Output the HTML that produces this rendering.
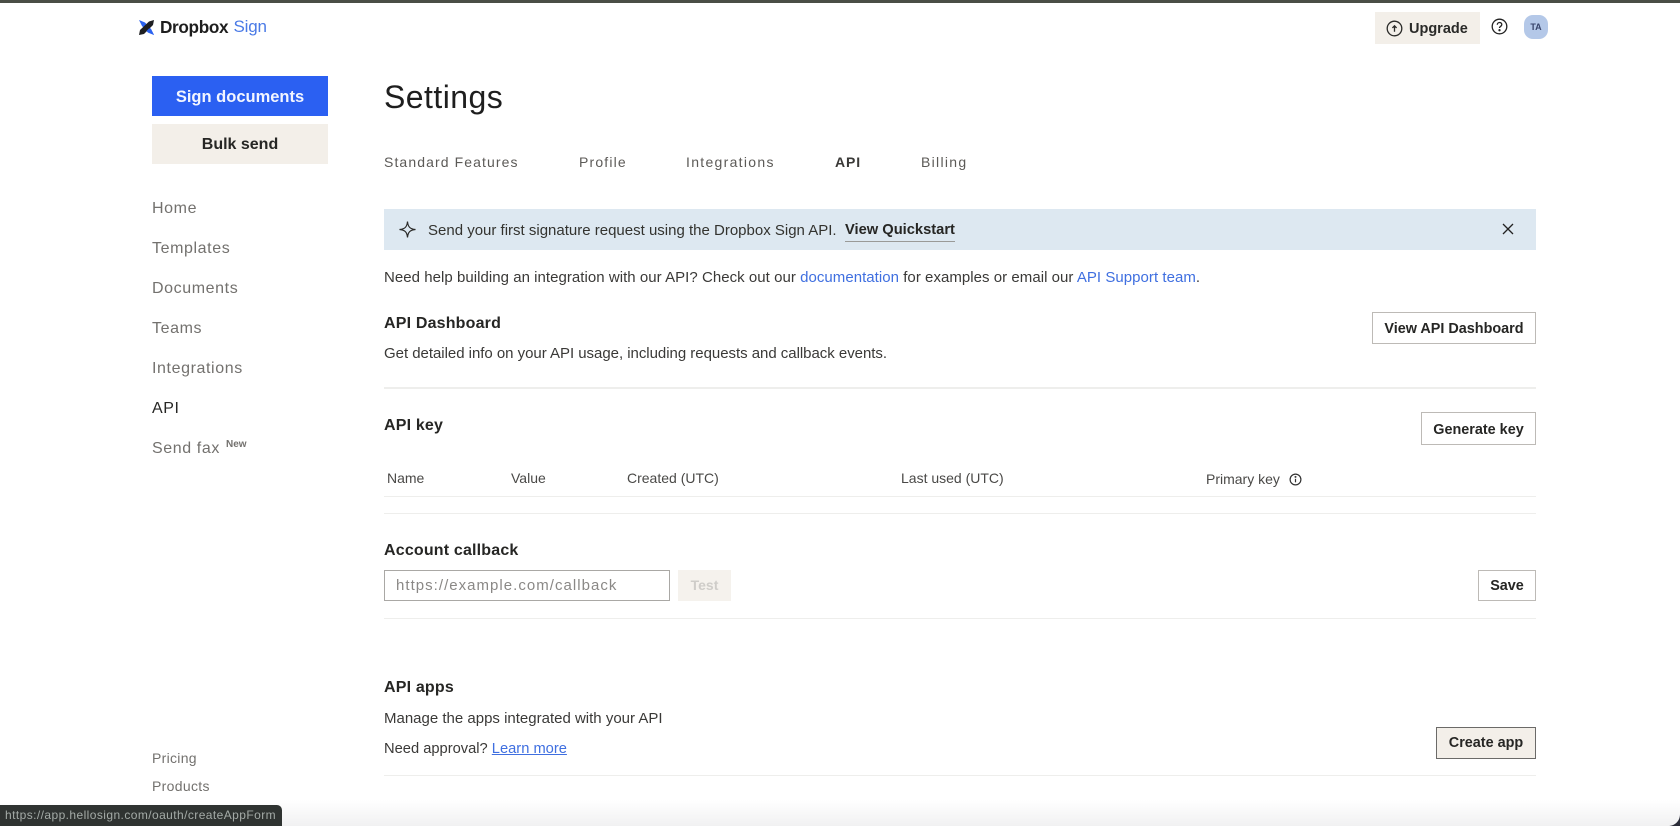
<!DOCTYPE html>
<html><head><meta charset="utf-8"><style>
html,body{margin:0;padding:0;width:1680px;height:826px;overflow:hidden;background:#fff;font-family:"Liberation Sans",sans-serif;color:#2a2a28}
.t{position:absolute;white-space:nowrap;line-height:20px;height:20px}
.b{font-weight:700}
.box{position:absolute;box-sizing:border-box}
.btn{position:absolute;box-sizing:border-box;background:#fff;border:1px solid #bdbab6;font-weight:700;font-size:14.4px;text-align:center;white-space:nowrap;color:#262624}
.nav{font-size:16px;color:#73716e;letter-spacing:.6px}
.tab{font-size:14px;color:#5c5a57;letter-spacing:1.17px}
.hr{position:absolute;left:384px;width:1152px;height:1px;background:#eeeeec}
.h{font-size:16px;font-weight:700;color:#262624;letter-spacing:.18px}
.p{font-size:15px;color:#3a3937}
.th{font-size:14px;color:#4a4947}
a{color:#3f6fe0;text-decoration:none}
</style></head><body>
<div class="box" style="left:0;top:0;width:1680px;height:3px;background:#4a4e46"></div>
<div class="box" style="left:0;top:800px;width:1680px;height:26px;background:linear-gradient(#fff,#f1f1f2)"></div>

<svg style="position:absolute;left:138px;top:19px" width="17" height="17" viewBox="0 0 17 17"><path d="M1 1L7 3.500 13 10 16 16 10 13.500 4 7z" fill="#2b62f0"/><path d="M16 1L15 6 6 15 1 16 2 11 11 2.500z" fill="#1e1f22"/><path d="M11 9.500L13 10 16 16 10 13.500 8.500 12z" fill="#2b62f0"/></svg>
<div class="t b" style="left:160px;top:17px;font-size:17.200px;letter-spacing:-.35px;color:#1e1e1e">Dropbox</div>
<div class="t" style="left:233.500px;top:17px;font-size:17px;letter-spacing:-.2px;color:#4a7ae6">Sign</div>

<div class="box" style="left:1375px;top:12px;width:105px;height:32px;background:#f3efe9"></div>
<svg style="position:absolute;left:1386px;top:19.500px" width="17" height="17" viewBox="0 0 17 17" fill="none" stroke="#2a2a28" stroke-width="1.300"><circle cx="8.500" cy="8.500" r="7.300"/><path d="M8.500 11.800V6M6.400 7.900l2.100-2.100 2.100 2.100"/></svg>
<div class="t b" style="left:1409px;top:19px;font-size:14.500px;color:#2a2a28">Upgrade</div>
<svg style="position:absolute;left:1491px;top:18px" width="17" height="17" viewBox="0 0 17 17" fill="none" stroke="#222" stroke-width="1.300"><circle cx="8.500" cy="8.500" r="7.300"/><path d="M6.300 6.800c0-3 4.500-3 4.500-.2 0 1.700-2.300 1.700-2.300 3.400"/><circle cx="8.500" cy="12.200" r=".5" fill="#222"/></svg>
<div class="box" style="left:1524px;top:15px;width:24px;height:24px;border-radius:9px;background:#b4c8e8;color:#39456b;font-size:9px;font-weight:700;text-align:center;line-height:24px">TA</div>

<div class="box" style="left:152px;top:76px;width:176px;height:40px;background:#2b60f2;color:#f2f5ff;font-weight:700;font-size:16.500px;text-align:center;line-height:42px">Sign documents</div>
<div class="box" style="left:152px;top:124px;width:176px;height:40px;background:#f3efe9;color:#262624;font-weight:700;font-size:16px;text-align:center;line-height:42px">Bulk send</div>

<div class="t nav" style="left:152px;top:199px">Home</div>
<div class="t nav" style="left:152px;top:239px">Templates</div>
<div class="t nav" style="left:152px;top:279px">Documents</div>
<div class="t nav" style="left:152px;top:319px">Teams</div>
<div class="t nav" style="left:152px;top:359px">Integrations</div>
<div class="t nav" style="left:152px;top:399px;color:#262624">API</div>
<div class="t nav" style="left:152px;top:439px">Send fax</div>
<div class="t" style="left:226px;top:435px;font-size:10px;font-weight:700;color:#73716e">New</div>
<div class="t" style="left:152px;top:748px;font-size:14px;color:#73716e;letter-spacing:.3px">Pricing</div>
<div class="t" style="left:152px;top:776px;font-size:14px;color:#73716e;letter-spacing:.32px">Products</div>

<div class="t" style="left:384px;top:79px;font-size:32px;line-height:36px;height:36px;color:#1e1e1e;letter-spacing:.45px">Settings</div>

<div class="t tab" style="left:384px;top:152px;letter-spacing:1.1px">Standard Features</div>
<div class="t tab" style="left:579px;top:152px">Profile</div>
<div class="t tab" style="left:686px;top:152px;letter-spacing:1.3px">Integrations</div>
<div class="t tab b" style="left:835px;top:152px;color:#3a3937;letter-spacing:.9px">API</div>
<div class="t tab" style="left:921px;top:152px;letter-spacing:1.3px">Billing</div>

<div class="box" style="left:384px;top:209px;width:1152px;height:41px;background:#dde8f1"></div>
<svg style="position:absolute;left:398px;top:220px" width="19" height="19" viewBox="0 0 19 19" fill="none" stroke="#2a2a28" stroke-width="1.200"><path d="M9.500 1.500C10 7 12 9 17.500 9.500 12 10 10 12 9.500 17.500 9 12 7 10 1.500 9.500 7 9 9 7 9.500 1.500z"/></svg>
<div class="t p" style="left:428px;top:221px;color:#33332f">Send your first signature request using the Dropbox Sign API.</div>
<div class="t b" style="left:845px;top:220px;font-size:14.700px;color:#262624">View Quickstart</div>
<div class="box" style="left:845px;top:241px;width:110px;height:1px;background:#9a9a98"></div>
<svg style="position:absolute;left:1501px;top:222px" width="14" height="14" viewBox="0 0 14 14" fill="none" stroke="#222" stroke-width="1.300"><path d="M2 2l10 10M12 2L2 12"/></svg>

<div class="t p" style="left:384px;top:268px;letter-spacing:.04px">Need help building an integration with our API? Check out our <a>documentation</a> for examples or email our <a>API Support team</a>.</div>

<div class="t h" style="left:384px;top:314px">API Dashboard</div>
<div class="t p" style="left:384px;top:344px;letter-spacing:-.03px">Get detailed info on your API usage, including requests and callback events.</div>
<div class="btn" style="left:1372px;top:312px;width:164px;height:32px;line-height:32px">View API Dashboard</div>
<div class="hr" style="top:387px;height:2px"></div>

<div class="t h" style="left:384px;top:416px">API key</div>
<div class="btn" style="left:1421px;top:412px;width:115px;height:33px;line-height:34px">Generate key</div>

<div class="t th" style="left:387px;top:468px">Name</div>
<div class="t th" style="left:511px;top:468px">Value</div>
<div class="t th" style="left:627px;top:468px">Created (UTC)</div>
<div class="t th" style="left:901px;top:468px">Last used (UTC)</div>
<div class="t th" style="left:1206px;top:469px">Primary key</div>
<svg style="position:absolute;left:1289px;top:473px" width="13" height="13" viewBox="0 0 13 13" fill="none" stroke="#333" stroke-width="1.200"><circle cx="6.500" cy="6.500" r="5.400"/><path d="M6.500 5.800v3.500"/><circle cx="6.500" cy="3.900" r=".4"/></svg>
<div class="hr" style="top:496px"></div>
<div class="hr" style="top:513px"></div>

<div class="t h" style="left:384px;top:541px">Account callback</div>
<div class="box" style="left:384px;top:570px;width:286px;height:31px;border:1px solid #aaa8a5;background:#fff;color:#8a8886;font-size:15px;line-height:30px;padding-left:11px;letter-spacing:1.030px">https://example.com/callback</div>
<div class="box" style="left:678px;top:570px;width:53px;height:31px;background:#f5f2ed;color:#cfcdc9;font-size:14px;font-weight:700;text-align:center;line-height:31px">Test</div>
<div class="btn" style="left:1478px;top:570px;width:58px;height:31px;line-height:30px">Save</div>
<div class="hr" style="top:618px"></div>

<div class="t h" style="left:384px;top:678px">API apps</div>
<div class="t p" style="left:384px;top:709px">Manage the apps integrated with your API</div>
<div class="t p" style="left:384px;top:739px;font-size:14.700px">Need approval? <a style="text-decoration:underline">Learn more</a></div>
<div class="btn" style="left:1436px;top:727px;width:100px;height:32px;line-height:31px;background:#f3efe9;border:1.500px solid #6b6a68">Create app</div>
<div class="hr" style="top:775px"></div>

<div class="box" style="left:0;top:805px;width:282px;height:21px;background:#2f3331;border-radius:0 5px 0 0;color:#a4aba7;font-size:12px;line-height:21px;padding-left:5px;letter-spacing:.42px;white-space:nowrap">https://app.hellosign.com/oauth/createAppForm</div>
<svg style="position:absolute;left:1668px;top:814px" width="12" height="12" viewBox="0 0 12 12"><path d="M12 0V12H0C7 12 12 7 12 0z" fill="#2a2c38"/></svg>
</body></html>
